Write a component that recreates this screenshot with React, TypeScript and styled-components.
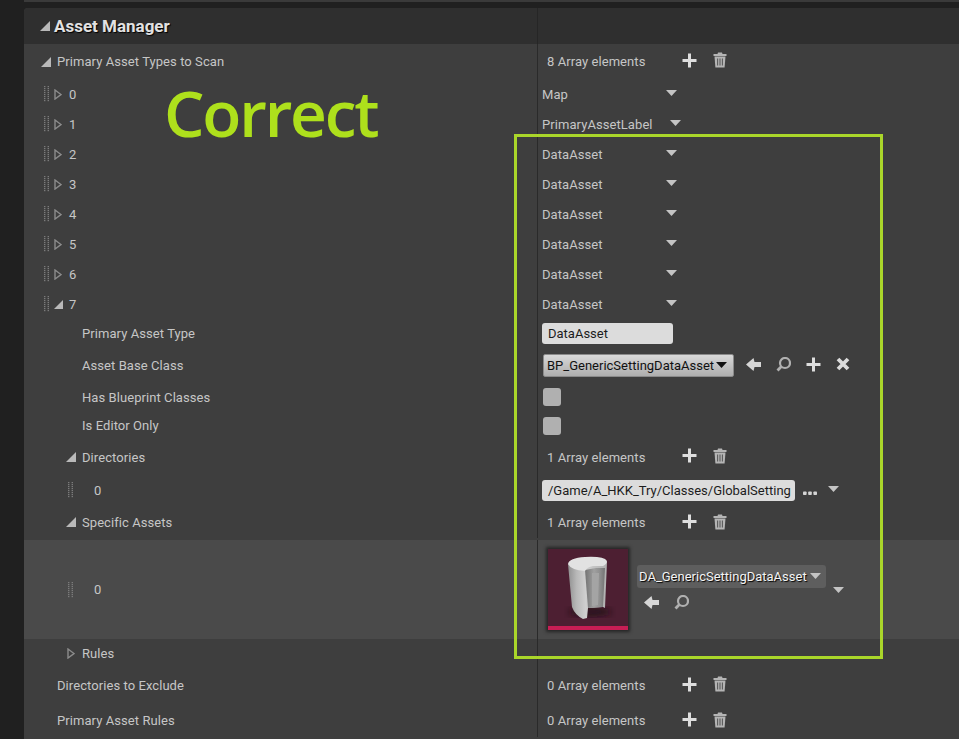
import * as React from 'react';
import styled, { createGlobalStyle } from 'styled-components';

const GlobalStyle = createGlobalStyle`
	html, body {
		margin: 0;
		padding: 0;
		background: #202020;
		overflow: hidden;
	}
	body {
		font-family: Roboto, "Liberation Sans", sans-serif;
	}
`;

const Page = styled.div`
	position: relative;
	width: 959px;
	height: 739px;
	overflow: hidden;
	background: #202020;
`;

const TopEdge = styled.div`
	height: 2px;
	margin: 0 0 6px 24px;
	background: #3a3a3a;
`;

const Panel = styled.div`
	margin-left: 24px;
	background: #3e3e3e;
	border-top-left-radius: 4px;
	overflow: hidden;
`;

const Header = styled.div`
	display: grid;
	grid-template-columns: 513px 1fr;
	height: 36px;
	background: #2f2f2f;
`;

const HeaderTitle = styled.div`
	display: flex;
	align-items: center;
	gap: 4px;
	padding: 0 0 1px 16px;
	font-size: 17px;
	font-weight: 700;
	color: #e2e2e2;
	text-shadow: 1px 1px 1px #000;
`;

const Row = styled.div<{ $h: number; $hi?: boolean; $lift?: number }>`
	display: grid;
	grid-template-columns: 513px 1fr;
	box-sizing: border-box;
	height: ${(p) => p.$h}px;
	padding-bottom: ${(p) => p.$lift ?? 0}px;
	background: ${(p) => (p.$hi ? '#4a4a4a' : 'transparent')};
`;

const LabelCell = styled.div<{ $indent: number; $lift?: number }>`
	display: flex;
	align-items: center;
	padding-left: ${(p) => p.$indent}px;
	padding-bottom: ${(p) => p.$lift ?? 0}px;
	font-size: 13px;
	letter-spacing: 0.07px;
	color: #c6c6c6;
`;

const ValueCell = styled.div<{ $pad?: number }>`
	display: flex;
	align-items: center;
	padding-left: ${(p) => p.$pad ?? 4}px;
	border-left: 1px solid #2a2a2a;
	font-size: 13px;
	letter-spacing: 0.07px;
	color: #c6c6c6;
`;

const HeaderValue = styled.div`
	border-left: 1px solid #262626;
`;

const Slot = styled.span<{ $w: number }>`
	display: inline-flex;
	align-items: center;
	flex: none;
	width: ${(p) => p.$w}px;
`;

const ArrayCount = styled.span`
	width: 135px;
	flex: none;
`;

const ComboText = styled.span<{ $w?: number }>`
	flex: none;
	width: ${(p) => p.$w ?? 124}px;
`;

const TextInput = styled.div<{ $w: number }>`
	flex: none;
	box-sizing: border-box;
	width: ${(p) => p.$w}px;
	height: 21px;
	padding-left: 6px;
	line-height: 21px;
	letter-spacing: 0;
	border-radius: 3px;
	background: #dcdcdc;
	color: #1c1c1c;
	white-space: nowrap;
	overflow: hidden;
`;

const ClassCombo = styled.div`
	display: flex;
	align-items: center;
	justify-content: space-between;
	flex: none;
	box-sizing: border-box;
	width: 191px;
	height: 23px;
	margin-left: 1px;
	padding: 0 6px 0 3px;
	letter-spacing: 0;
	border: 1px solid #8a8a8a;
	border-radius: 2px;
	background: linear-gradient(#d8d8d8, #aeaeae);
	color: #111;
	white-space: nowrap;
`;

const Checkbox = styled.div`
	width: 18px;
	height: 18px;
	margin-left: 1px;
	border-radius: 3px;
	background: #b0b0b0;
`;

const IconRow = styled.div<{ $gap: number; $left: number; $lift?: number }>`
	display: flex;
	align-items: center;
	gap: ${(p) => p.$gap}px;
	margin-left: ${(p) => p.$left}px;
	margin-bottom: ${(p) => p.$lift ?? 0}px;
`;

const AssetRow = styled.div`
	display: flex;
	align-items: center;
	padding-left: 10px;
`;

const Thumbnail = styled.div`
	display: flex;
	flex-direction: column;
	flex: none;
	width: 80px;
	height: 81px;
	background: #4d1f32;
	box-shadow: 0 0 3px 2px #262626;
`;

const ThumbArt = styled.svg`
	display: block;
	flex: 1;
	width: 80px;
`;

const ThumbBar = styled.div`
	height: 4px;
	background: #c81e55;
`;

const AssetPicker = styled.div`
	display: flex;
	flex-direction: column;
	gap: 3px;
	margin-left: 9px;
`;

const AssetCombo = styled.div`
	display: flex;
	align-items: center;
	justify-content: space-between;
	box-sizing: border-box;
	width: 189px;
	height: 23px;
	padding: 0 5px 0 2px;
	letter-spacing: 0;
	border-radius: 3px;
	background: #5e5e5e;
	color: #f4f4f4;
	text-shadow: 1px 1px 1px #000;
	white-space: nowrap;
`;

const AssetTools = styled.div`
	display: flex;
	align-items: center;
	gap: 15px;
	padding-left: 7px;
	height: 24px;
`;

const AssetArrow = styled.div`
	display: flex;
	margin-left: 7px;
`;

const Annotation = styled.div`
	position: absolute;
	left: 164px;
	top: 69px;
	font-family: "Open Sans", sans-serif;
	font-size: 64px;
	font-weight: 600;
	letter-spacing: -2.2px;
	line-height: 88px;
	color: #aee01c;
	white-space: nowrap;
`;

const AnnotationBox = styled.div`
	position: absolute;
	left: 514px;
	top: 134px;
	box-sizing: border-box;
	width: 369px;
	height: 525px;
	border: 3px solid #aad62a;
	pointer-events: none;
`;

const CaretSvg = styled.svg<{ $lift: number }>`
	flex: none;
	margin-bottom: ${(p) => p.$lift}px;
`;

const Expanded = ({ size = 10 }: { size?: number }) => (
	<svg width={size} height={size} viewBox="0 0 10 10">
		<path d="M0 10 L10 0 L10 10 Z" fill="#b9b9b9" />
	</svg>
);

const Collapsed = () => (
	<svg width="8" height="11" viewBox="0 0 8 11">
		<path d="M1 1 L7 5.5 L1 10 Z" fill="none" stroke="#8c8c8c" strokeWidth="1.4" />
	</svg>
);

const Handle = () => (
	<svg width="6" height="16" viewBox="0 0 6 16">
		{[0, 2, 4, 6, 8, 10, 12, 14].map((y) => (
			<g key={y} fill="#7b7b7b">
				<rect x="0" y={y} width="1.4" height="1.2" />
				<rect x="3.6" y={y} width="1.4" height="1.2" />
			</g>
		))}
	</svg>
);

const Caret = ({ color = '#c4c4c4', lift = 2 }: { color?: string; lift?: number }) => (
	<CaretSvg $lift={lift} width="11" height="6" viewBox="0 0 11 6">
		<path d="M0 0 H11 L5.5 6 Z" fill={color} />
	</CaretSvg>
);

const Plus = () => (
	<svg width="15" height="15" viewBox="0 0 15 15">
		<path d="M6 0.5 H9 V6 H14.5 V9 H9 V14.5 H6 V9 H0.5 V6 H6 Z" fill="#dedede" />
	</svg>
);

const Trash = () => (
	<svg width="14" height="16" viewBox="0 0 14 16">
		<path d="M0.5 2 H4.5 L5 0.5 H9 L9.5 2 H13.5 V4 H0.5 Z" fill="#b4b4b4" />
		<path d="M1.5 4.6 H12.5 L11.6 15.5 H2.4 Z" fill="#b4b4b4" />
		<path d="M4.6 6.5 V13.6 M7 6.5 V13.6 M9.4 6.5 V13.6" stroke="#5a5a5a" strokeWidth="1.1" />
	</svg>
);

const Back = () => (
	<svg width="15" height="13" viewBox="0 0 15 13">
		<path d="M7.5 0 L0 6.5 L7.5 13 L8.5 9 H15 V4 H8.5 Z" fill="#d6d6d6" />
	</svg>
);

const Search = () => (
	<svg width="15" height="15" viewBox="0 0 15 15">
		<circle cx="9" cy="6" r="5" fill="none" stroke="#b0b0b0" strokeWidth="2.2" />
		<path d="M5.4 9.6 L1.5 13.5" stroke="#b0b0b0" strokeWidth="2.8" />
	</svg>
);

const Cross = () => (
	<svg width="14" height="14" viewBox="0 0 14 14">
		<path d="M2 2 L12 12 M12 2 L2 12" stroke="#dcdcdc" strokeWidth="3.8" />
	</svg>
);

const Dots = () => (
	<svg width="14" height="14" viewBox="0 0 14 14">
		<g fill="#d4d4d4">
			<rect x="0" y="8.5" width="3.6" height="3.6" rx="0.8" />
			<rect x="5.2" y="8.5" width="3.6" height="3.6" rx="0.8" />
			<rect x="10.4" y="8.5" width="3.6" height="3.6" rx="0.8" />
		</g>
	</svg>
);

const ArrayTools = ({ lift = 3 }: { lift?: number }) => (
	<IconRow $gap={16} $left={0} $lift={lift}>
		<Plus />
		<Trash />
	</IconRow>
);

const CylinderArt = () => (
	<ThumbArt viewBox="0 0 80 77">
		<defs>
			<linearGradient id="wall" x1="0" x2="1" y1="0" y2="0">
				<stop offset="0" stopColor="#8f8f8f" />
				<stop offset="0.22" stopColor="#b8b8b8" />
				<stop offset="0.45" stopColor="#cfcfcf" />
				<stop offset="1" stopColor="#b0b0b0" />
			</linearGradient>
			<linearGradient id="inner" x1="0" x2="1" y1="0" y2="0">
				<stop offset="0" stopColor="#727272" />
				<stop offset="0.45" stopColor="#a0a0a0" />
				<stop offset="0.75" stopColor="#8e8e8e" />
				<stop offset="1" stopColor="#747474" />
			</linearGradient>
			<filter id="soft">
				<feGaussianBlur stdDeviation="3" />
			</filter>
		</defs>
		<ellipse cx="42" cy="63" rx="21" ry="5" fill="#1d0c13" filter="url(#soft)" opacity="0.7" />
		<path d="M20 15 L24 58 Q27 66 35 70 L39 69 L40 59 L55 58 L57 59 L59 13 Z" fill="url(#wall)" />
		<path d="M37 21 L40 59 L55 58 L57 19 L48 19 Z" fill="url(#inner)" />
		<path d="M44 24 H51 L50 56 L44 57 Z" fill="#a4a4a4" />
		<path d="M20 15 Q21 9 37 8 Q56 7 59 12 Q59 15 55 17 H45 Q39 18 37 22 Q23 21 20 15 Z" fill="#e2e2e2" />
	</ThumbArt>
);

const collapsedRows: [string, string, number?][] = [
	['0', 'Map'],
	['1', 'PrimaryAssetLabel', 128],
	['2', 'DataAsset'],
	['3', 'DataAsset'],
	['4', 'DataAsset'],
	['5', 'DataAsset'],
	['6', 'DataAsset'],
];

export default function App() {
	return (
		<Page>
			<GlobalStyle />
			<TopEdge />
			<Panel>
				<Header>
					<HeaderTitle>
						<Expanded />
						Asset Manager
					</HeaderTitle>
					<HeaderValue />
				</Header>

				<Row $h={35}>
					<LabelCell $indent={17}>
						<Slot $w={16}>
							<Expanded />
						</Slot>
						Primary Asset Types to Scan
					</LabelCell>
					<ValueCell $pad={9}>
						<ArrayCount>8 Array elements</ArrayCount>
						<ArrayTools />
					</ValueCell>
				</Row>

				{collapsedRows.map(([index, value, width]) => (
					<Row $h={30} key={index}>
						<LabelCell $indent={20}>
							<Slot $w={10}>
								<Handle />
							</Slot>
							<Slot $w={15}>
								<Collapsed />
							</Slot>
							{index}
						</LabelCell>
						<ValueCell>
							<ComboText $w={width}>{value}</ComboText>
							<Caret />
						</ValueCell>
					</Row>
				))}

				<Row $h={30}>
					<LabelCell $indent={20}>
						<Slot $w={10}>
							<Handle />
						</Slot>
						<Slot $w={15}>
							<Expanded size={9} />
						</Slot>
						7
					</LabelCell>
					<ValueCell>
						<ComboText>DataAsset</ComboText>
						<Caret />
					</ValueCell>
				</Row>

				<Row $h={29}>
					<LabelCell $indent={58}>Primary Asset Type</LabelCell>
					<ValueCell>
						<TextInput $w={131}>DataAsset</TextInput>
					</ValueCell>
				</Row>

				<Row $h={34}>
					<LabelCell $indent={58}>Asset Base Class</LabelCell>
					<ValueCell>
						<ClassCombo>
							BP_GenericSettingDataAsset
							<Caret color="#111" lift={0} />
						</ClassCombo>
						<IconRow $gap={15} $left={12} $lift={2}>
							<Back />
							<Search />
							<Plus />
							<Cross />
						</IconRow>
					</ValueCell>
				</Row>

				<Row $h={30}>
					<LabelCell $indent={58}>Has Blueprint Classes</LabelCell>
					<ValueCell>
						<Checkbox />
					</ValueCell>
				</Row>

				<Row $h={28}>
					<LabelCell $indent={58} $lift={2}>
						Is Editor Only
					</LabelCell>
					<ValueCell>
						<Checkbox />
					</ValueCell>
				</Row>

				<Row $h={34}>
					<LabelCell $indent={42}>
						<Slot $w={16}>
							<Expanded />
						</Slot>
						Directories
					</LabelCell>
					<ValueCell $pad={9}>
						<ArrayCount>1 Array elements</ArrayCount>
						<ArrayTools />
					</ValueCell>
				</Row>

				<Row $h={32}>
					<LabelCell $indent={44}>
						<Slot $w={26}>
							<Handle />
						</Slot>
						0
					</LabelCell>
					<ValueCell>
						<TextInput $w={253}>/Game/A_HKK_Try/Classes/GlobalSetting</TextInput>
						<IconRow $gap={11} $left={8}>
							<Dots />
							<Caret />
						</IconRow>
					</ValueCell>
				</Row>

				<Row $h={34} $lift={2}>
					<LabelCell $indent={42}>
						<Slot $w={16}>
							<Expanded />
						</Slot>
						Specific Assets
					</LabelCell>
					<ValueCell $pad={9}>
						<ArrayCount>1 Array elements</ArrayCount>
						<ArrayTools lift={1} />
					</ValueCell>
				</Row>

				<Row $h={99} $hi>
					<LabelCell $indent={44}>
						<Slot $w={26}>
							<Handle />
						</Slot>
						0
					</LabelCell>
					<ValueCell $pad={0}>
						<AssetRow>
							<Thumbnail>
								<CylinderArt />
								<ThumbBar />
							</Thumbnail>
							<AssetPicker>
								<AssetCombo>
									DA_GenericSettingDataAsset
									<Caret lift={0} />
								</AssetCombo>
								<AssetTools>
									<Back />
									<Search />
								</AssetTools>
							</AssetPicker>
							<AssetArrow>
								<Caret lift={0} />
							</AssetArrow>
						</AssetRow>
					</ValueCell>
				</Row>

				<Row $h={29}>
					<LabelCell $indent={43}>
						<Slot $w={15}>
							<Collapsed />
						</Slot>
						Rules
					</LabelCell>
					<ValueCell />
				</Row>

				<Row $h={35}>
					<LabelCell $indent={33}>Directories to Exclude</LabelCell>
					<ValueCell $pad={9}>
						<ArrayCount>0 Array elements</ArrayCount>
						<ArrayTools />
					</ValueCell>
				</Row>

				<Row $h={36} $lift={2}>
					<LabelCell $indent={33}>Primary Asset Rules</LabelCell>
					<ValueCell $pad={9}>
						<ArrayCount>0 Array elements</ArrayCount>
						<ArrayTools lift={1} />
					</ValueCell>
				</Row>
			</Panel>

			<Annotation>Correct</Annotation>
			<AnnotationBox />
		</Page>
	);
}
